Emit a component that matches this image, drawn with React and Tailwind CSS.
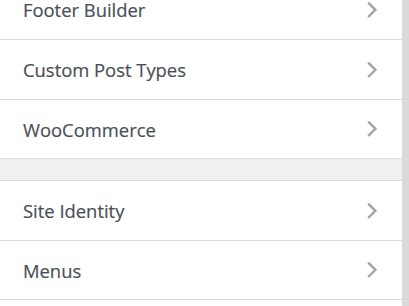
import React from "react";

const Chevron = () => (
  <svg width="12" height="18" viewBox="0 0 12 18" className="shrink-0">
    <path d="M2.2 1.6 L9.4 8.8 L2.2 16" fill="none" stroke="#a0a4a8" strokeWidth="2.4" />
  </svg>
);

const Row = ({ label, h = "h-[60px]" }) => (
  <div className={`flex ${h} items-center justify-between border-b border-[#dcdcde] bg-white pl-[23px] pr-[24px]`}>
    <span className="text-[18.4px] leading-[19px] text-[#4a5057] [-webkit-text-stroke:0.2px_#4a5057]" style={{ fontFamily: '"Open Sans", "Noto Sans", sans-serif' }}>
      {label}
    </span>
    <Chevron />
  </div>
);

export default function App() {
  return (
    <div className="flex h-[306px] w-[409px] overflow-hidden bg-white">
      <div className="flex-1 overflow-hidden">
        <div className="-mt-[20px]">
          <Row label="Footer Builder" />
          <Row label="Custom Post Types" />
          <Row label="WooCommerce" h="h-[59px]" />
          <div className="h-[21px] bg-[#f0f0f1]" />
          <div className="border-t border-[#dcdcde]">
            <Row label="Site Identity" />
            <Row label="Menus" h="h-[59px]" />
          </div>
        </div>
      </div>
      <div className="w-[7px] bg-[#dadada]" />
    </div>
  );
}
